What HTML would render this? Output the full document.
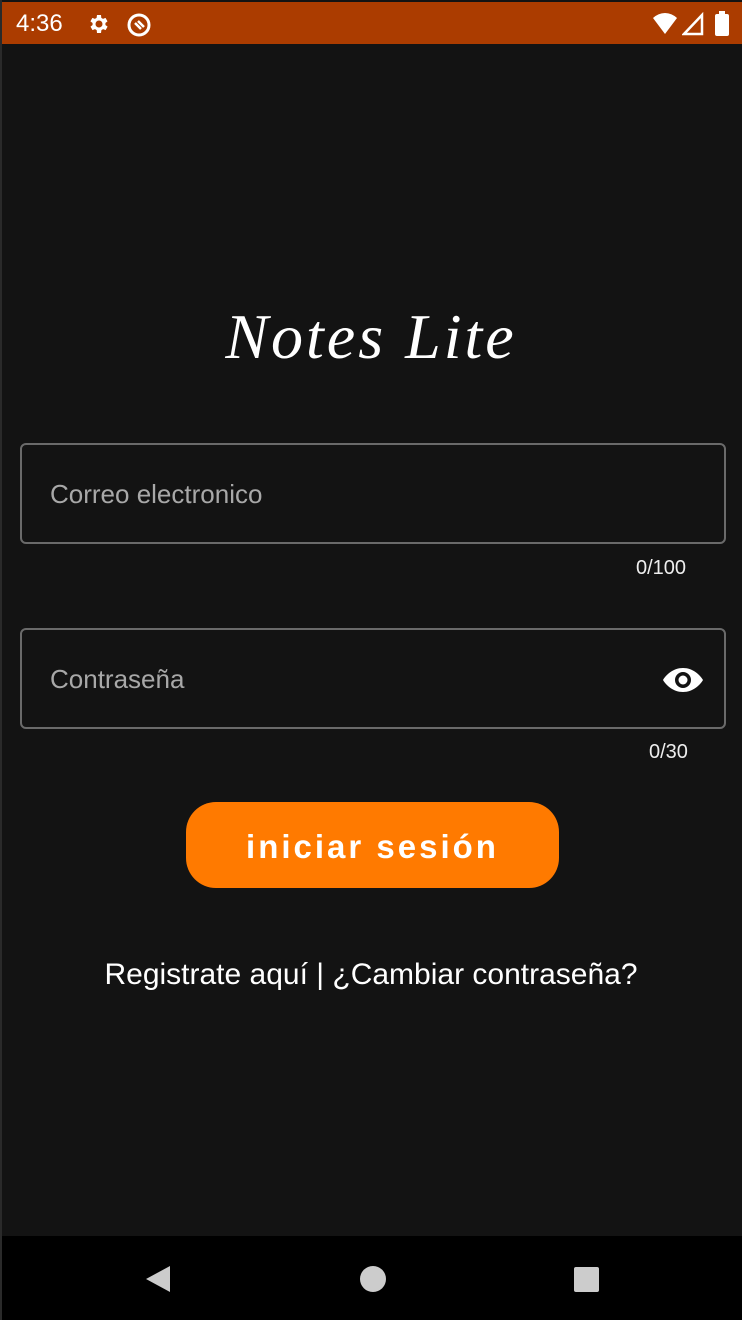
<!DOCTYPE html>
<html><head><style>
body{margin:0;width:742px;height:1320px;background:#2a2a2a;position:relative;overflow:hidden;font-family:"Liberation Sans",sans-serif}
.scr{position:absolute;left:2px;top:0;width:740px;height:1320px;background:#131313}
.sb{position:absolute;left:2px;top:2px;width:740px;height:42px;background:#ab3c00;color:#fff}
.nav{position:absolute;left:2px;top:1236px;width:740px;height:84px;background:#000}
.field{position:absolute;left:20px;width:706px;height:101px;border:2px solid #6a6a6a;border-radius:6px;box-sizing:border-box}
.ph{position:absolute;left:28px;top:34px;font-size:26px;color:#a8a8a8}
.cnt{position:absolute;color:#eee;font-size:20px}
</style></head><body>
<div class="scr"></div>
<div class="sb">
<div style="position:absolute;left:14px;top:8px;font-size:24px">4:36</div>
<svg style="position:absolute;left:84px;top:10px" width="24" height="24" viewBox="0 0 24 24"><path fill="#fff" d="M19.4 13a7.5 7.5 0 0 0 0-2l2.1-1.6-2-3.5-2.5 1a7 7 0 0 0-1.7-1L15 3h-4l-.4 2.9a7 7 0 0 0-1.7 1l-2.5-1-2 3.5L6.6 11a7.5 7.5 0 0 0 0 2l-2.1 1.6 2 3.5 2.5-1a7 7 0 0 0 1.7 1L11 21h4l.4-2.9a7 7 0 0 0 1.7-1l2.5 1 2-3.5zM13 15.5a3.5 3.5 0 1 1 0-7 3.5 3.5 0 0 1 0 7z"/></svg>
<svg style="position:absolute;left:124px;top:10px" width="26" height="26" viewBox="0 0 26 26"><circle cx="13" cy="13" r="10" fill="none" stroke="#fff" stroke-width="3"/><path d="M9 11l6 6M12 9l6 6" stroke="#fff" stroke-width="2.5"/></svg>
<svg style="position:absolute;left:650px;top:10px" width="26" height="24" viewBox="0 0 26 24"><path fill="#fff" d="M1 6a17 17 0 0 1 24 0L13 22z"/></svg>
<svg style="position:absolute;left:680px;top:10px" width="22" height="24" viewBox="0 0 22 24"><path d="M2 22L20 3v19z" fill="none" stroke="#fff" stroke-width="2.5"/></svg>
<div style="position:absolute;left:713px;top:12px;width:14px;height:22px;background:#fff;border-radius:2px"></div>
<div style="position:absolute;left:717px;top:9px;width:6px;height:4px;background:#fff"></div>
</div>
<div style="position:absolute;left:0;width:742px;top:300px;text-align:center;color:#fff;font-family:'Liberation Serif',serif;font-style:italic;font-size:64px;letter-spacing:3px">Notes Lite</div>
<div class="field" style="top:443px"><div class="ph">Correo electronico</div></div>
<div class="cnt" style="left:636px;top:557px">0/100</div>
<div class="field" style="top:628px"><div class="ph">Contraseña</div>
<svg style="position:absolute;left:640px;top:36px" width="42" height="28" viewBox="0 0 42 28"><path fill="#fff" d="M21 2C11 2 4 9 1 14c3 5 10 12 20 12s17-7 20-12C38 9 31 2 21 2zm0 20a8 8 0 1 1 0-16 8 8 0 0 1 0 16z"/><circle cx="21" cy="14" r="4.5" fill="#fff"/></svg></div>
<div class="cnt" style="left:649px;top:741px">0/30</div>
<div style="position:absolute;left:186px;top:802px;width:373px;height:86px;background:#ff7a00;border-radius:30px;color:#fff;font-size:33px;font-weight:bold;text-align:center;line-height:90px;letter-spacing:3px">iniciar sesión</div>
<div style="position:absolute;left:0;width:742px;top:958px;text-align:center;color:#fff;font-size:30px;font-family:'Liberation Sans',sans-serif">Registrate aquí | ¿Cambiar contraseña?</div>
<div class="nav">
<svg style="position:absolute;left:142px;top:28px" width="30" height="30" viewBox="0 0 30 30"><path fill="#ccc" d="M26 2v26L2 15z"/></svg>
<div style="position:absolute;left:358px;top:30px;width:26px;height:26px;border-radius:50%;background:#ccc"></div>
<div style="position:absolute;left:572px;top:31px;width:25px;height:25px;border-radius:2px;background:#ccc"></div>
</div>
</body></html>
